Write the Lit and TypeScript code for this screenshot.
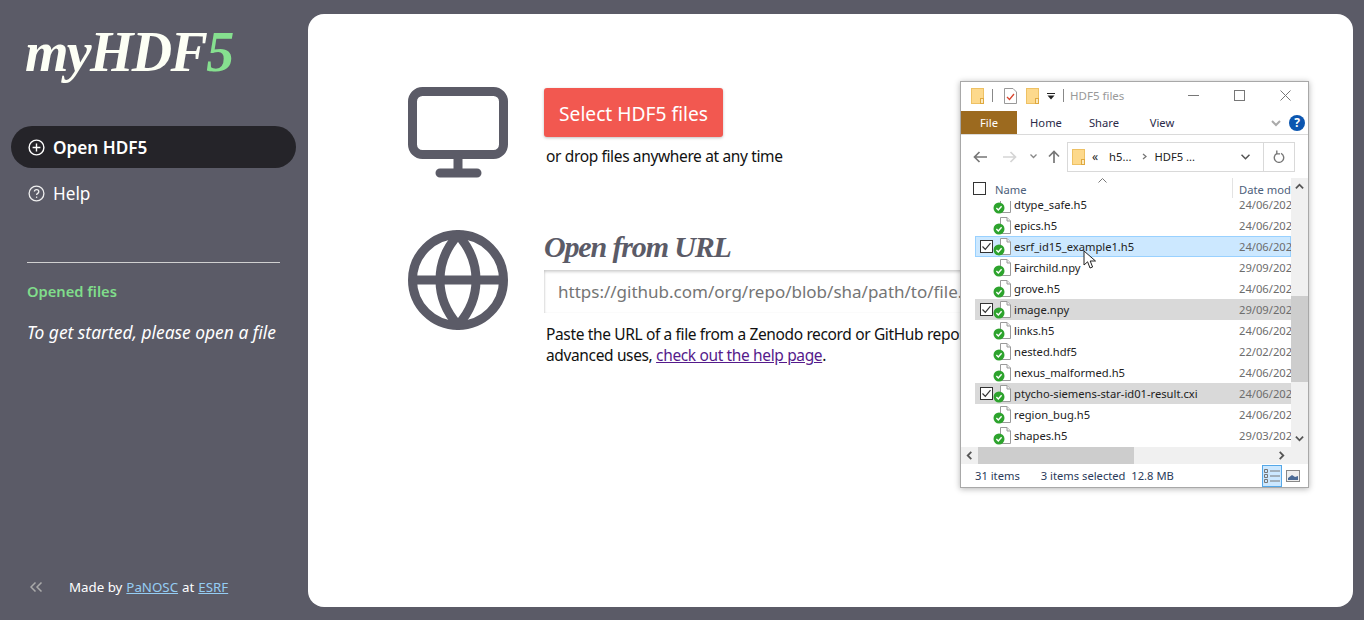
import { LitElement, html, css } from "lit";
import { customElement } from "lit/decorators.js";

const folder = (w = 13, h = 16) => html`<svg class="ic" width=${w} height=${h} viewBox="0 0 13 16">
  <rect x="0.5" y="0.5" width="12" height="15" fill="#fdd98c" stroke="#eec164"/>
  <rect x="9.5" y="10.5" width="3" height="5" fill="#fbe9bd" stroke="#e0a93f"/>
</svg>`;

const fileIcon = html`<svg class="ic" width="20" height="18" viewBox="0 0 20 18">
  <path d="M7.5 .5H14L17.5 4V16.5H7.5Z" fill="#fff" stroke="#9a9a9a"/>
  <path d="M14 .5V4H17.5" fill="#eee" stroke="#9a9a9a"/>
  <circle cx="6" cy="12" r="5.5" fill="#2da32d"/>
  <path d="M3.4 12.1L5.3 14L8.6 10.3" fill="none" stroke="#fff" stroke-width="1.4"/>
</svg>`;

const rows: [string, string, string][] = [
  ["dtype_safe.h5", "24/06/202", ""],
  ["epics.h5", "24/06/202", ""],
  ["esrf_id15_example1.h5", "24/06/202", "hot"],
  ["Fairchild.npy", "29/09/202", ""],
  ["grove.h5", "24/06/202", ""],
  ["image.npy", "29/09/202", "sel"],
  ["links.h5", "24/06/202", ""],
  ["nested.hdf5", "22/02/202", ""],
  ["nexus_malformed.h5", "24/06/202", ""],
  ["ptycho-siemens-star-id01-result.cxi", "24/06/202", "sel"],
  ["region_bug.h5", "24/06/202", ""],
  ["shapes.h5", "29/03/202", ""],
];

const chevron = (d: string, size = 9, color = "#555") => html`<svg class="ic" width=${size} height=${size} viewBox="0 0 10 10">
  <path d=${d} fill="none" stroke=${color} stroke-width="2"/></svg>`;

@customElement("app-root")
export class AppRoot extends LitElement {
  static styles = css`
    :host { display: block; height: 620px; overflow: hidden; background: #5b5b67; font-family: "Noto Sans", "Open Sans", sans-serif; }
    .page { display: flex; height: 620px; box-sizing: border-box; padding: 14px 11px 13px 0; }
    .ic { display: block; flex: none; }

    .side { width: 308px; flex: none; display: flex; flex-direction: column; color: #fff; }
    .logo { font: italic 700 56px/70px "Liberation Serif", serif; color: #fdfff5; margin: 3px 0 0 25px; height: 109px; letter-spacing: -1.7px; white-space: nowrap; }
    .logo b { color: #86e08f; font-weight: 700; }
    .nav { margin: 0 12px 0 11px; height: 42px; border-radius: 21px; display: flex; align-items: center; gap: 8px; padding-left: 17px; font-size: 17.2px; }
    .nav.on { background: #252429; font-weight: 600; margin-bottom: 4px; }
    .rule { height: 1px; background: #d0d0d0; margin: 48px 28px 0 27px; }
    .opened { color: #80dd8b; font-weight: 600; font-size: 14.7px; line-height: 20px; margin: 18px 0 0 27px; }
    .hint { font-style: italic; font-size: 17.4px; line-height: 24px; margin: 19px 0 0 27px; white-space: nowrap; }
    .foot { margin-top: auto; display: flex; align-items: center; height: 20px; padding: 0 0 0 30px; font-size: 13.3px; margin-bottom: 10px; }
    .foot a { color: #95cdf4; text-decoration: underline; margin: 0 4px; }
    .foot a:last-child { margin-right: 0; }
    .back { width: 39px; color: #aaa; }

    .main { flex: 1; position: relative; background: #fff; border-radius: 16px; padding: 73px 0 0 100px; color: #111; overflow: hidden; }
    .block { display: flex; gap: 36px; }
    .block + .block { margin-top: 51px; }
    .body { flex: none; width: 706px; }
    .btn { width: 179px; height: 49px; background: #f25850; color: #fff; border: 0; border-radius: 3px; font: 400 19.2px "Noto Sans", sans-serif; box-shadow: 0 1px 3px rgba(0,0,0,.25); padding: 1px 0 0; margin: 1px 0 0; display: block; }
    .sub { margin: 8px 0 0 2px; font-size: 15.5px; line-height: 22px; letter-spacing: -0.36px; white-space: nowrap; }
    .h { font: italic 700 30px/34px "Liberation Serif", serif; color: #5b5b67; margin: 0; height: 40px; letter-spacing: -1.15px; white-space: nowrap; }
    .url { box-sizing: border-box; width: 706px; height: 43px; display: block; border: 0; box-shadow: inset 0 2px 3px rgba(0,0,0,.18), inset 1px 0 2px rgba(0,0,0,.06); padding: 0 14px; font: 17px "Noto Sans", sans-serif; color: #111; outline: 0; }
    .url::placeholder { color: #757575; opacity: 1; }
    .para { margin: 11px 0 0 2px; font-size: 15.5px; line-height: 21px; width: 560px; letter-spacing: -0.36px; }
    .para a { color: #551a8b; text-decoration: underline; }

    .win { position: absolute; left: 652px; top: 67px; width: 349px; height: 407px; box-sizing: border-box; background: #fff; border: 1px solid #a8a8a8; box-shadow: 0 1px 6px rgba(0,0,0,.3); color: #222; font-size: 11.2px; display: flex; flex-direction: column; }
    .title { height: 29px; box-sizing: border-box; padding: 0 0 2px 10px; flex: none; display: flex; align-items: center; color: #999; font-size: 11.5px; }
    .sep { width: 1px; height: 13px; background: #888; }
    .caption { margin-left: auto; display: flex; align-items: center; gap: 35px; padding-right: 17px; }
    .ribbon { height: 24px; box-sizing: border-box; flex: none; display: flex; align-items: center; border-bottom: 1px solid #dadada; font-size: 11.2px; }
    .ribbon span { width: 58px; text-align: center; color: #2a2a48; }
    .ribbon .file { width: 56px; height: 23px; line-height: 23px; background: #9c6a1f; color: #fff; }
    .rib-r { margin-left: auto; display: flex; align-items: center; gap: 8px; padding-right: 3px; }
    .help { width: 16px; height: 16px; border-radius: 50%; background: #0b56b0; color: #fff; font-size: 12px; font-weight: 700; text-align: center; line-height: 16px; }
    .navbar { height: 43px; flex: none; display: flex; align-items: center; padding-left: 12px; }
    .addr { margin-left: 7px; width: 228px; height: 30px; box-sizing: border-box; border: 1px solid #d9d9d9; display: flex; align-items: center; padding-left: 4px; color: #222; }
    .addr .refresh { margin-left: auto; width: 30px; height: 28px; border-left: 1px solid #d9d9d9; display: flex; align-items: center; justify-content: center; }
    .content { flex: 1; min-height: 0; display: grid; grid-template-columns: 1fr 17px; grid-template-rows: 23px 246px 17px; }
    .head { grid-column: 1; grid-row: 1; position: relative; display: flex; align-items: center; color: #4c607a; padding: 0 0 3px 12px; }
    .cb { box-sizing: border-box; width: 13px; height: 13px; border: 1px solid #333; background: #fff; flex: none; position: relative; }
    .head .name { margin: 2px 0 0 9px; }
    .head .d { position: absolute; left: 271px; right: 0; top: 0; height: 20px; padding-left: 6px; border-left: 1px solid #e3e3e3; line-height: 24px; white-space: nowrap; overflow: visible; }
    .sort { position: absolute; left: 137px; top: 0; }
    .sb { grid-column: 2; grid-row: 1 / 3; background: #f0f0f0; position: relative; display: flex; flex-direction: column; }
    .thumb { position: absolute; left: 0; right: 0; top: 118px; height: 86px; background: #cdcdcd; }
    .arrow { height: 17px; display: flex; align-items: center; justify-content: center; }
    .list { grid-column: 1; grid-row: 2; overflow: hidden; padding-left: 14px; }
    .rows { margin-top: -7px; }
    .row { height: 21px; box-sizing: border-box; display: flex; align-items: center; position: relative; white-space: nowrap; }
    .row.hot { background: #cce8ff; outline: 1px solid #99d1ff; outline-offset: -1px; }
    .row.sel { background: #d9d9d9; }
    .row .cb { margin-left: 5px; }
    .row .cb svg { position: absolute; left: 0; top: 0; }
    .spot { width: 20px; height: 18px; margin-left: 18px; flex: none; }
    .row .cb + .spot { margin-left: 0; }
    .row .fn { margin-left: 0; padding-left: 1px; }
    .row .dt { position: absolute; left: 264px; right: 0; overflow: hidden; color: #6d6d6d; }
    .hs { grid-column: 1 / 3; grid-row: 3; background: #f0f0f0; position: relative; display: flex; align-items: center; justify-content: space-between; padding: 0 22px 0 4px; }
    .hs svg { position: relative; }
    .hthumb { position: absolute; left: 17px; top: 0; bottom: 0; width: 156px; background: #cdcdcd; }
    .status { height: 23px; flex: none; display: flex; align-items: center; padding-left: 14px; color: #2a3a5a; }
    .status span + span { margin-left: 21px; }
    .views { margin-left: auto; display: flex; align-items: center; gap: 4px; padding-right: 8px; }
    .vbtn { width: 20px; height: 22px; box-sizing: border-box; background: #cce8ff; border: 1px solid #55a8e8; display: flex; align-items: center; justify-content: center; }
    .cursor { position: absolute; left: 122px; top: 168px; }
  `;

  render() {
    return html`<div class="page">
      <aside class="side">
        <div class="logo">myHDF<b>5</b></div>
        <div class="nav on">
          <svg class="ic" width="17" height="17" viewBox="0 0 17 17" fill="none" stroke="#fff" stroke-width="1.4"><circle cx="8.5" cy="8.5" r="7.4"/><path d="M8.5 4.6V12.4M4.6 8.5H12.4"/></svg>
          <span>Open HDF5</span>
        </div>
        <div class="nav">
          <svg class="ic" width="17" height="17" viewBox="0 0 17 17" fill="none" stroke="#eee" stroke-width="1.3"><circle cx="8.5" cy="8.5" r="7.4"/><path d="M6.4 6.6C6.5 4 10.8 4.1 10.8 6.7C10.8 8.4 8.6 8.3 8.6 10"/><path d="M8.6 11.6V12.9"/></svg>
          <span>Help</span>
        </div>
        <div class="rule"></div>
        <div class="opened">Opened files</div>
        <div class="hint">To get started, please open a file</div>
        <div class="foot">
          <svg class="back" width="13" height="10" viewBox="0 0 39 10" fill="none" stroke="#aaa" stroke-width="1.5"><path d="M5.5 .5L1 5L5.5 9.5M11.5 .5L7 5L11.5 9.5"/></svg>
          <span>Made by</span><a>PaNOSC</a><span>at</span><a>ESRF</a>
        </div>
      </aside>

      <main class="main">
        <section class="block">
          <svg class="ic" width="100" height="92" viewBox="0 0 100 92" fill="none" stroke="#5b5b67" stroke-width="9" stroke-linecap="round">
            <rect x="4.5" y="4.5" width="91" height="63" rx="10"/>
            <path d="M50 72V85M32 86H69"/>
          </svg>
          <div class="body">
            <button class="btn">Select HDF5 files</button>
            <p class="sub">or drop files anywhere at any time</p>
          </div>
        </section>
        <section class="block">
          <svg class="ic" width="100" height="100" viewBox="0 0 100 100" fill="none" stroke="#5b5b67" stroke-width="9">
            <circle cx="50" cy="50" r="45.5"/>
            <path d="M4 50H96"/>
            <path d="M50 5C60 16 68 32 68 50C68 68 60 84 50 95C40 84 32 68 32 50C32 32 40 16 50 5Z"/>
          </svg>
          <div class="body">
            <h2 class="h">Open from URL</h2>
            <input class="url" placeholder="https://github.com/org/repo/blob/sha/path/to/file.h5" />
            <p class="para">Paste the URL of a file from a Zenodo record or GitHub repository. For more advanced uses, <a>check out the help page</a>.</p>
          </div>
        </section>

        <div class="win">
          <div class="title">
            ${folder()}
            <i class="sep" style="margin:0 11px 0 8px"></i>
            <svg class="ic" width="13" height="16" viewBox="0 0 13 16"><path d="M.5 .5H9L12.5 4V15.5H.5Z" fill="#fff" stroke="#999"/><path d="M3 9L5.5 11.5L10 6" fill="none" stroke="#d9452e" stroke-width="1.3"/></svg>
            <span style="width:9px"></span>${folder()}
            <svg class="ic" style="margin:0 8px 0 8px" width="8" height="8" viewBox="0 0 8 8"><path d="M0 1.5H8" stroke="#222"/><path d="M.5 3.5H7.5L4 7.5Z" fill="#222"/></svg>
            <i class="sep" style="margin-right:6px"></i>
            <span>HDF5 files</span>
            <div class="caption">
              <svg class="ic" width="11" height="11" viewBox="0 0 11 11"><path d="M0 5.5H11" stroke="#777"/></svg>
              <svg class="ic" width="11" height="11" viewBox="0 0 11 11"><rect x=".5" y=".5" width="10" height="10" fill="none" stroke="#777"/></svg>
              <svg class="ic" width="11" height="11" viewBox="0 0 11 11"><path d="M.5 .5L10.5 10.5M10.5 .5L.5 10.5" stroke="#777"/></svg>
            </div>
          </div>
          <div class="ribbon">
            <span class="file">File</span><span>Home</span><span>Share</span><span>View</span>
            <div class="rib-r">
              ${chevron("M1 3L5 7L9 3", 10, "#aaa")}
              <div class="help">?</div>
            </div>
          </div>
          <div class="navbar">
            <svg class="ic" width="14" height="12" viewBox="0 0 14 12" fill="none" stroke="#777" stroke-width="1.7"><path d="M14 6H1.5M6.5 1L1.5 6L6.5 11"/></svg>
            <svg class="ic" style="margin-left:16px" width="14" height="12" viewBox="0 0 14 12" fill="none" stroke="#d5d5d5" stroke-width="1.7"><path d="M0 6H12.5M7.5 1L12.5 6L7.5 11"/></svg>
            <svg class="ic" style="margin-left:13px" width="7" height="5" viewBox="0 0 7 5" fill="none" stroke="#888" stroke-width="1.3"><path d="M.5 .5L3.5 3.5L6.5 .5"/></svg>
            <svg class="ic" style="margin-left:11px" width="12" height="13" viewBox="0 0 12 13" fill="none" stroke="#777" stroke-width="1.7"><path d="M6 13V1.5M1 6.5L6 1.5L11 6.5"/></svg>
            <div class="addr">
              ${folder()}
              <span style="margin-left:7px;font-size:12px;line-height:10px">«</span>
              <span style="margin-left:11px">h5...</span>
              <svg class="ic" style="margin-left:11px" width="5" height="7" viewBox="0 0 5 7"><path d="M1 1L4 3.5L1 6" fill="none" stroke="#777" stroke-width="1.3"/></svg>
              <span style="margin-left:7px">HDF5 ...</span>
              <svg class="ic" style="margin-left:46px" width="9" height="6" viewBox="0 0 9 6"><path d="M.5 .8L4.5 4.8L8.5 .8" fill="none" stroke="#555" stroke-width="1.5"/></svg>
              <div class="refresh">
                <svg class="ic" width="12" height="13" viewBox="0 0 12 13" fill="none" stroke="#777" stroke-width="1.4"><path d="M4 3.4A4.7 4.7 0 1 0 8 3.4"/><path d="M3.8 .5V3.9H7"/></svg>
              </div>
            </div>
          </div>
          <div class="content">
            <div class="head">
              <div class="cb"></div><span class="name">Name</span>
              <svg class="sort ic" width="9" height="5" viewBox="0 0 9 5"><path d="M.5 4.5L4.5 .5L8.5 4.5" fill="none" stroke="#777"/></svg>
              <span class="d">Date mod</span>
            </div>
            <div class="sb">
              <div class="arrow">${chevron("M1 7L5 3L9 7")}</div>
              <div class="thumb"></div>
              <div class="arrow" style="margin-top:auto">${chevron("M1 3L5 7L9 3")}</div>
            </div>
            <div class="list"><div class="rows">
              ${rows.map(([n, d, k]) => html`<div class="row ${k}">
                ${k ? html`<div class="cb"><svg width="11" height="11" viewBox="0 0 11 11"><path d="M1.5 5.5L4.3 8.3L9.5 2.2" fill="none" stroke="#333" stroke-width="1.2"/></svg></div>` : ""}
                <div class="spot">${fileIcon}</div>
                <span class="fn">${n}</span>
                <span class="dt">${d}</span>
              </div>`)}
            </div></div>
            <div class="hs">
              <div class="hthumb"></div>
              ${chevron("M7 1L3 5L7 9")}
              ${chevron("M3 1L7 5L3 9")}
            </div>
          </div>
          <div class="status">
            <span>31 items</span><span>3 items selected&nbsp; 12.8 MB</span>
            <div class="views">
              <div class="vbtn"><svg class="ic" width="16" height="14" viewBox="0 0 16 14" fill="none" stroke="#777"><path d="M.5 .5H3.5V3.5H.5ZM.5 5.5H3.5V8.5H.5ZM.5 10.5H3.5V13.5H.5ZM6 2H16M6 7H16M6 12H16"/></svg></div>
              <svg class="ic" width="14" height="12" viewBox="0 0 14 12"><rect x=".5" y=".5" width="13" height="11" fill="#eee" stroke="#888"/><path d="M2 8L6 5L9 7L12 6V10H2Z" fill="#4a6a96"/></svg>
            </div>
          </div>
          <svg class="cursor ic" width="14" height="20" viewBox="0 0 14 20"><path d="M1 1V15L4.6 11.8L7 18L9.6 17L7.2 11H12.5Z" fill="#fff" stroke="#222" stroke-width="1"/></svg>
        </div>
      </main>
    </div>`;
  }
}
